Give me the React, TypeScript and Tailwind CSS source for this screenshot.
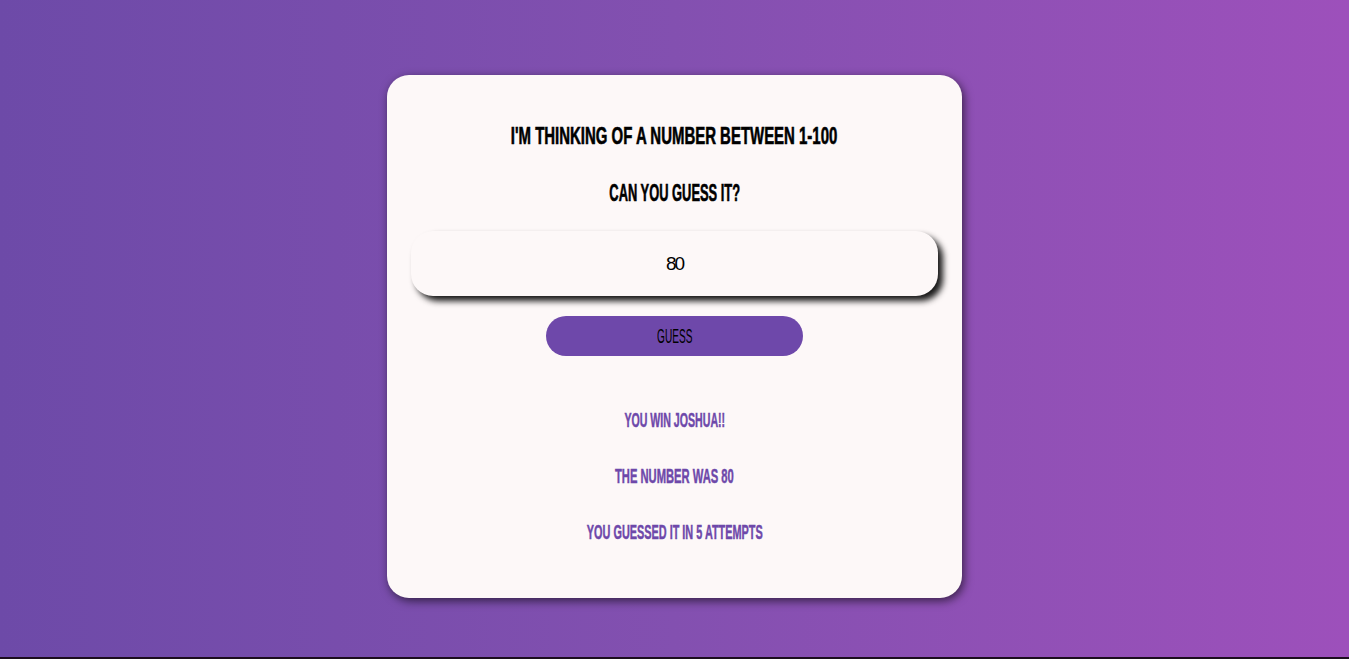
import { useState } from "react"

const font = { fontFamily: '"Liberation Sans", Arial, sans-serif' }

// squeezed text line, stands in for the condensed display face
function Line({ children, className, squeeze }: { children: React.ReactNode; className: string; squeeze: string }) {
  return (
    <div className={`text-center leading-[30px] h-[30px] ${className}`}>
      <span className={`inline-block origin-center ${squeeze}`}>{children}</span>
    </div>
  )
}

export default function App() {
  const [guess, setGuess] = useState("80")

  return (
    <div style={font} className="w-full">
      <div className="h-[657px] bg-gradient-to-r from-[#6d4aa8] via-[#8350b0] to-[#9d50bb] flex justify-center pt-[75px]">
        <div className="w-[575px] h-[523px] bg-[#fdf8f8] rounded-[22px] shadow-[2px_3px_10px_rgba(0,0,0,0.6)] px-6 pt-[46px] flex flex-col">
          <Line className="text-[23px] font-bold text-black [-webkit-text-stroke:0.6px_black]" squeeze="scale-x-[0.65]">
            I'M THINKING OF A NUMBER BETWEEN 1-100
          </Line>
          <Line className="mt-[27px] text-[23px] font-bold text-black [-webkit-text-stroke:0.6px_black]" squeeze="scale-x-[0.56]">
            CAN YOU GUESS IT?
          </Line>

          <input
            value={guess}
            onChange={(e) => setGuess(e.target.value)}
            className="mt-[23px] h-[65px] w-full rounded-[22px] bg-[#fdf8f8] text-center text-[19px] tracking-[-2px] text-black outline-none shadow-[5px_5px_6px_rgba(0,0,0,0.9)]"
          />

          <button className="mt-[20px] self-center w-[257px] h-[40px] rounded-full bg-[#6e48aa] text-black text-[21px] leading-[40px]">
            <span className="inline-block scale-x-[0.48]">GUESS</span>
          </button>

          <Line className="mt-[49px] text-[21px] font-bold text-[#6e48aa] [-webkit-text-stroke:0.5px_#6e48aa]" squeeze="scale-x-[0.505]">
            YOU WIN JOSHUA!!
          </Line>
          <Line className="mt-[26px] text-[21px] font-bold text-[#6e48aa] [-webkit-text-stroke:0.5px_#6e48aa]" squeeze="scale-x-[0.533]">
            THE NUMBER WAS 80
          </Line>
          <Line className="mt-[26px] text-[21px] font-bold text-[#6e48aa] [-webkit-text-stroke:0.5px_#6e48aa]" squeeze="scale-x-[0.518]">
            YOU GUESSED IT IN 5 ATTEMPTS
          </Line>
        </div>
      </div>
      <div className="h-[2px] bg-[#1c0d1e]" />
    </div>
  )
}
